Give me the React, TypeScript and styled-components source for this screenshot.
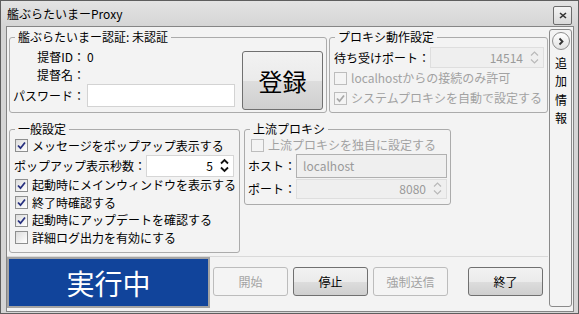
import React from "react"
import styled, { createGlobalStyle } from "styled-components"

const GlobalStyle = createGlobalStyle`
  html, body {
    margin: 0;
    padding: 0;
    background: #d6d6d6;
  }
  body {
    font-family: "Noto Sans CJK JP", "Noto Sans", sans-serif;
    font-size: 12px;
    color: #000;
  }
`

const Window = styled.div`
  width: 579px;
  height: 314px;
  box-sizing: border-box;
  border: 1px solid #5e5e5e;
  background: #d5d5d5;
  display: flex;
  flex-direction: column;
`

const TitleBar = styled.div`
  height: 25px;
  flex: none;
  display: flex;
  align-items: center;
  justify-content: space-between;
  padding: 0 6px 0 6px;
  background: linear-gradient(#e3e3e3, #d5d5d5);
  line-height: 16px;
`

const CloseButton = styled.div`
  width: 19px;
  height: 19px;
  box-sizing: border-box;
  align-self: flex-start;
  margin-top: 5px;
  border: 1px solid #6c6c6c;
  border-radius: 2px;
  background: linear-gradient(#f4f4f4, #d9d9d9);
  display: flex;
  align-items: center;
  justify-content: center;
`

const Client = styled.div`
  flex: 1;
  margin: 0 4px 1px 5px;
  border: 1px solid #858585;
  background: #f3f3f3;
  display: flex;
  align-items: flex-start;
  gap: 1px;
  padding: 2px 1px 0 2px;
`

const Main = styled.div`
  width: 539px;
  display: flex;
  flex-direction: column;
`

const GroupRow = styled.div<{ $gap: number; $mt?: number; $h: number }>`
  display: flex;
  align-items: flex-start;
  gap: ${(p) => p.$gap}px;
  margin-top: ${(p) => p.$mt ?? 0}px;
  height: ${(p) => p.$h}px;
`

const Group = styled.fieldset<{ $w: number; $h: number }>`
  box-sizing: border-box;
  width: ${(p) => p.$w}px;
  height: ${(p) => p.$h}px;
  flex: none;
  margin: 0;
  padding: 0;
  min-width: 0;
  border: 1px solid #ababab;
  border-radius: 3px;
`

const Legend = styled.legend`
  margin-left: 5px;
  padding: 0 3px;
  font-size: 12px;
  line-height: 16px;
`

const AuthBody = styled.div`
  display: flex;
  justify-content: space-between;
  padding: 3px 3px 0 3px;
`

const AuthGrid = styled.div`
  display: grid;
  grid-template-columns: auto 148px;
  grid-template-rows: 18px 18px 23px;
  column-gap: 2px;
  align-items: center;
  line-height: 16px;
`

const FieldLabel = styled.span`
  justify-self: end;
  white-space: nowrap;
`

const TextInput = styled.input`
  box-sizing: border-box;
  width: 148px;
  height: 23px;
  margin: 0;
  border: 1px solid #d3d3d3;
  background: #fff;
  outline: none;
  font: inherit;
`

const BigButton = styled.button`
  width: 81px;
  height: 59px;
  margin-top: 3px;
  padding: 0;
  font-family: inherit;
  font-size: 24px;
  color: #000;
  border: 1px solid #707070;
  border-radius: 3px;
  background: linear-gradient(#f2f2f2 0%, #ebebeb 50%, #dddddd 51%, #cfcfcf 100%);
`

const Stack = styled.div<{ $pl: number }>`
  display: flex;
  flex-direction: column;
  padding: 0 3px 0 ${(p) => p.$pl}px;
  line-height: 16px;
`

const Line = styled.div<{ $h: number; $pt?: number; $muted?: boolean }>`
  height: ${(p) => p.$h}px;
  margin-top: ${(p) => p.$pt ?? 0}px;
  display: flex;
  align-items: center;
  white-space: nowrap;
  color: ${(p) => (p.$muted ? "#a2a2a2" : "#000")};
`

const CheckLine = styled(Line)<{ $indent?: number }>`
  gap: 4px;
  padding-left: ${(p) => p.$indent ?? 0}px;
`

const Box = styled.span<{ $disabled?: boolean }>`
  width: 13px;
  height: 13px;
  box-sizing: border-box;
  flex: none;
  border: 1px solid ${(p) => (p.$disabled ? "#bdbdbd" : "#8e8f8f")};
  background: ${(p) =>
    p.$disabled ? "#f4f4f4" : "linear-gradient(135deg, #dcdcdc, #ffffff)"};
  display: flex;
  align-items: center;
  justify-content: center;
`

const Field = styled.div<{ $w?: number; $h: number; $disabled?: boolean; $framed?: boolean }>`
  box-sizing: border-box;
  ${(p) => (p.$w ? `width: ${p.$w}px;` : "flex: 1;")}
  height: ${(p) => p.$h}px;
  display: flex;
  align-items: center;
  gap: 7px;
  padding: 0 4px 0 6px;
  border: 1px solid ${(p) => (p.$framed ? "#b0b0b0" : p.$disabled ? "#dedede" : "#d6d6d6")};
  background: ${(p) => (p.$disabled ? "#efefef" : "#fff")};
  color: ${(p) => (p.$disabled ? "#9a9a9a" : "#000")};
`

const FieldValue = styled.span<{ $right?: boolean }>`
  flex: 1;
  text-align: ${(p) => (p.$right ? "right" : "left")};
`

const Separator = styled.div`
  height: 1px;
  margin: 3px 0 0 -2px;
  background: #d9d9d9;
`

const BottomRow = styled.div`
  display: flex;
  align-items: flex-start;
  margin-left: -2px;
  height: 51px;
`

const Status = styled.div`
  width: 203px;
  height: 51px;
  box-sizing: border-box;
  flex: none;
  border: 2px solid #a3a3a3;
  background: #11449b;
  color: #fff;
  font-size: 28px;
  line-height: 1;
  display: flex;
  align-items: center;
  justify-content: center;
`

const Buttons = styled.div`
  flex: 1;
  display: flex;
  gap: 5px;
  margin-left: 3px;
  padding-top: 10px;
`

const PushButton = styled.button<{ $end?: boolean }>`
  width: 75px;
  height: 29px;
  padding: 0;
  margin-left: ${(p) => (p.$end ? "auto" : "0")};
  margin-right: ${(p) => (p.$end ? "5px" : "0")};
  font-family: inherit;
  font-size: 12px;
  color: #000;
  border: 1px solid #707070;
  border-radius: 3px;
  background: linear-gradient(#f2f2f2 0%, #ebebeb 50%, #dddddd 51%, #cfcfcf 100%);

  &:disabled {
    color: #a3a3a3;
    border-color: #bcbcbc;
    background: #f4f4f4;
  }
`

const Side = styled.div`
  width: 23px;
  height: 278px;
  box-sizing: border-box;
  flex: none;
  border: 1px solid #8a8a8a;
  border-radius: 3px;
  display: flex;
  flex-direction: column;
  align-items: center;
  padding-top: 2px;
`

const RoundButton = styled.div`
  width: 18px;
  height: 18px;
  box-sizing: border-box;
  border: 1px solid #8d8d8d;
  border-radius: 50%;
  background: linear-gradient(#ffffff, #e2e2e2);
  display: flex;
  align-items: center;
  justify-content: center;
`

const SideLabel = styled.div`
  writing-mode: vertical-rl;
  letter-spacing: 6.5px;
  line-height: 12px;
  margin-top: 7px;
`

function Check({ on, disabled }: { on?: boolean; disabled?: boolean }) {
  return (
    <Box $disabled={disabled}>
      {on && (
        <svg width="9" height="9" viewBox="0 0 9 9">
          <path
            d="M1 4.5 L3.5 7.2 L8 1.5"
            fill="none"
            stroke={disabled ? "#a8a8a8" : "#27307f"}
            strokeWidth="1.8"
          />
        </svg>
      )}
    </Box>
  )
}

function Arrows({ disabled }: { disabled?: boolean }) {
  return (
    <svg width="9" height="15" viewBox="0 0 9 15" style={{ flex: "none" }}>
      <g fill="none" stroke={disabled ? "#b9b9b9" : "#111"} strokeWidth={disabled ? 1.2 : 1.8}>
        <path d="M1 5.5 L4.5 2 L8 5.5" />
        <path d="M1 9.5 L4.5 13 L8 9.5" />
      </g>
    </svg>
  )
}

export default function App() {
  return (
    <>
      <GlobalStyle />
      <Window>
        <TitleBar>
          <span>艦ぶらたいまーProxy</span>
          <CloseButton>
            <svg width="8" height="7" viewBox="0 0 8 7">
              <path d="M1 1 L7 6 M7 1 L1 6" stroke="#333" strokeWidth="1.6" />
            </svg>
          </CloseButton>
        </TitleBar>
        <Client>
          <Main>
            <GroupRow $gap={2} $h={84}>
              <Group $w={318} $h={84}>
                <Legend>艦ぶらたいまー認証: 未認証</Legend>
                <AuthBody>
                  <AuthGrid>
                    <FieldLabel>提督ID：</FieldLabel>
                    <span>0</span>
                    <FieldLabel>提督名：</FieldLabel>
                    <span />
                    <FieldLabel>パスワード：</FieldLabel>
                    <TextInput type="password" readOnly />
                  </AuthGrid>
                  <BigButton>登録</BigButton>
                </AuthBody>
              </Group>
              <Group $w={219} $h={84}>
                <Legend>プロキシ動作設定</Legend>
                <Stack $pl={4}>
                  <Line $h={21} $pt={2}>
                    待ち受けポート：
                    <Field $h={21} $disabled>
                      <FieldValue $right>14514</FieldValue>
                      <Arrows disabled />
                    </Field>
                  </Line>
                  <CheckLine $h={20} $muted>
                    <Check disabled />
                    localhostからの接続のみ許可
                  </CheckLine>
                  <CheckLine $h={20} $muted>
                    <Check on disabled />
                    システムプロキシを自動で設定する
                  </CheckLine>
                </Stack>
              </Group>
            </GroupRow>

            <GroupRow $gap={4} $mt={8} $h={132}>
              <Group $w={231} $h={132}>
                <Legend>一般設定</Legend>
                <Stack $pl={4}>
                  <CheckLine $h={17.5} $indent={1}>
                    <Check on />
                    メッセージをポップアップ表示する
                  </CheckLine>
                  <Line $h={22}>
                    ポップアップ表示秒数：
                    <Field $w={88} $h={22}>
                      <FieldValue $right>5</FieldValue>
                      <Arrows />
                    </Field>
                  </Line>
                  <CheckLine $h={17.5} $indent={1}>
                    <Check on />
                    起動時にメインウィンドウを表示する
                  </CheckLine>
                  <CheckLine $h={17.5} $indent={1}>
                    <Check on />
                    終了時確認する
                  </CheckLine>
                  <CheckLine $h={17.5} $indent={1}>
                    <Check on />
                    起動時にアップデートを確認する
                  </CheckLine>
                  <CheckLine $h={17.5} $indent={1}>
                    <Check />
                    詳細ログ出力を有効にする
                  </CheckLine>
                </Stack>
              </Group>
              <Group $w={207} $h={84}>
                <Legend>上流プロキシ</Legend>
                <Stack $pl={3}>
                  <CheckLine $h={16} $indent={3} $muted>
                    <Check disabled />
                    上流プロキシを独自に設定する
                  </CheckLine>
                  <Line $h={25}>
                    ホスト：
                    <Field $h={24} $disabled $framed>
                      <FieldValue>localhost</FieldValue>
                    </Field>
                  </Line>
                  <Line $h={21}>
                    ポート：
                    <Field $h={20} $disabled>
                      <FieldValue $right>8080</FieldValue>
                      <Arrows disabled />
                    </Field>
                  </Line>
                </Stack>
              </Group>
            </GroupRow>

            <Separator />

            <BottomRow>
              <Status>実行中</Status>
              <Buttons>
                <PushButton disabled>開始</PushButton>
                <PushButton>停止</PushButton>
                <PushButton disabled>強制送信</PushButton>
                <PushButton $end>終了</PushButton>
              </Buttons>
            </BottomRow>
          </Main>
          <Side>
            <RoundButton>
              <svg width="8" height="9" viewBox="0 0 8 9">
                <path d="M2.5 1.5 L5.5 4.5 L2.5 7.5" fill="none" stroke="#333" strokeWidth="1.8" />
              </svg>
            </RoundButton>
            <SideLabel>追加情報</SideLabel>
          </Side>
        </Client>
      </Window>
    </>
  )
}
